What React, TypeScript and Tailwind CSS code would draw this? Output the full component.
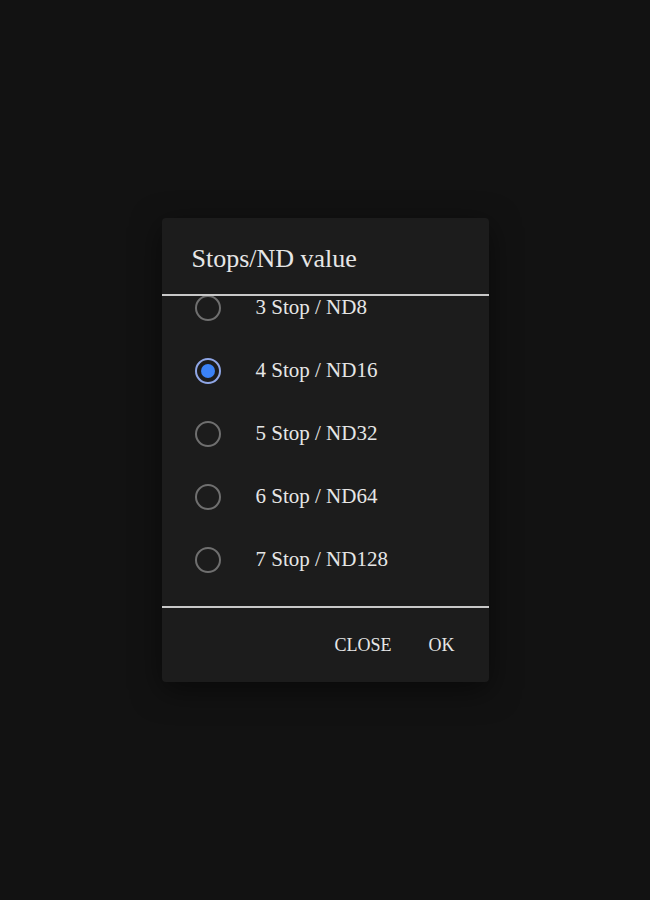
import React, { useState } from "react";

const options = [
    "3 Stop / ND8",
    "4 Stop / ND16",
    "5 Stop / ND32",
    "6 Stop / ND64",
    "7 Stop / ND128",
];

const Radio: React.FC<{ checked: boolean }> = ({ checked }) => (
    <span
        className={`flex h-[26px] w-[26px] shrink-0 items-center justify-center rounded-full border-2 ${
            checked ? "border-[#8fa6e6]" : "border-[#6f6f6f]"
        }`}
    >
        {checked && <span className="h-[14px] w-[14px] rounded-full bg-[#3b82f6]" />}
    </span>
);

export default function App() {
    const [selected, setSelected] = useState(1);

    return (
        <div className="flex h-[900px] w-[650px] items-start justify-center bg-[#121212] pt-[218px] font-['Liberation_Serif',serif] text-[#e6e6e6]">
            <div className="w-[327px] rounded-[4px] bg-[#1c1c1c] shadow-[0_8px_30px_rgba(0,0,0,0.5)]">
                <h2 className="h-[76px] px-[30px] pt-[26px] text-[26px] leading-[30px]">
                    Stops/ND value
                </h2>
                <div className="h-[2px] bg-[#c8c8c8]" />
                <div className="h-[310px] overflow-hidden">
                    <div className="-mt-[20px]">
                        {options.map((opt, i) => (
                            <button
                                key={opt}
                                onClick={() => setSelected(i)}
                                className="flex h-[63px] w-full items-center gap-[35px] pl-[33px] text-left text-[21px]"
                            >
                                <Radio checked={selected === i} />
                                <span>{opt}</span>
                            </button>
                        ))}
                    </div>
                </div>
                <div className="h-[2px] bg-[#c8c8c8]" />
                <div className="flex h-[74px] items-center justify-end gap-[37px] pr-[34px] text-[18px]">
                    <button>CLOSE</button>
                    <button>OK</button>
                </div>
            </div>
        </div>
    );
}
